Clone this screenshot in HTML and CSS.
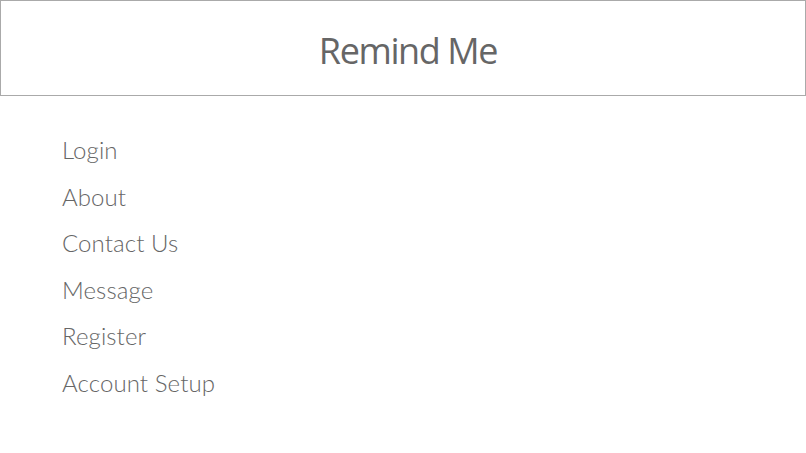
FILE: index.html
```html
<!DOCTYPE html>
<html lang="en">
<head>
    <meta charset="UTF-8">
    <title>Remind Me</title>
    <link rel="stylesheet" href="styles.css">
</head>
<body>

<div class="header">
    <h1 class="title">Remind Me</h1>
</div>

<ul class="menu">
    <li><a href="#">Login</a></li>
    <li><a href="#">About</a></li>
    <li><a href="#">Contact Us</a></li>
    <li><a href="#">Message</a></li>
    <li><a href="#">Register</a></li>
    <li><a href="#">Account Setup</a></li>
</ul>

</body>
</html>
```

FILE: styles.css
```css
body, h1, ul {
    margin: 0;
    padding: 0;
}
body {
    background-color: #fff;
    color: #666;
}
.header {
    height: 94px;
    border: 1px solid #aaa;
    display: flex;
    align-items: center;
    justify-content: center;
}
.title {
    font-family: 'Open Sans', sans-serif;
    font-weight: 400;
    font-size: 36px;
    letter-spacing: -1.4px;
    color: #666;
    margin-top: 4px;
    padding-left: 10px;
}
.menu {
    list-style: none;
    padding: 31px 0 0 62px;
}
.menu li {
    height: 46.6px;
    line-height: 46.6px;
}
.menu a {
    font-family: 'Lato', sans-serif;
    font-weight: 300;
    font-size: 24px;
    letter-spacing: 0.1px;
    color: #666;
    text-decoration: none;
}
```
